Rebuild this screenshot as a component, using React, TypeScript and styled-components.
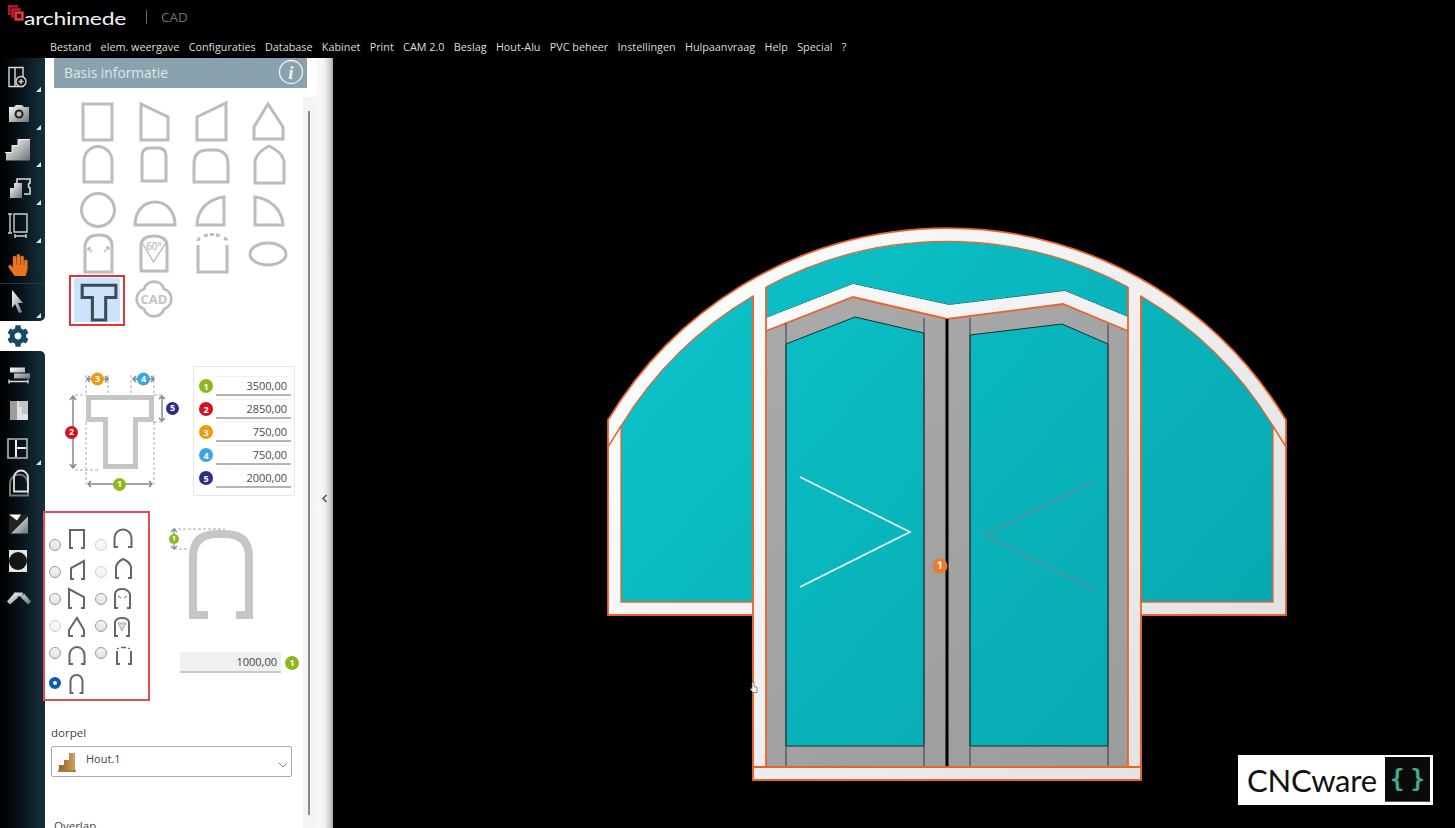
import React from "react";
import styled, { createGlobalStyle } from "styled-components";
import { FaCog, FaHandPaper } from "react-icons/fa";

const Global = createGlobalStyle`
  html, body { margin: 0; padding: 0; background: #000; height: 100%; overflow: hidden; }
  body { font-family: "Open Sans", "Noto Sans", sans-serif; }
  #root { height: 100%; }
`;

const Page = styled.div`
  width: 1455px; height: 828px; display: flex; flex-direction: column; background: #000; overflow: hidden;
`;
const TopBar = styled.header`
  height: 58px; flex: none; display: flex; flex-direction: column; background: #000;
`;
const BrandRow = styled.div`
  height: 34px; display: flex; align-items: center; padding-left: 8px;
`;
const LogoMark = styled.svg`
  width: 17px; height: 17px; margin-top: -8px; flex: none;
`;
const LogoText = styled.span`
  font-family: "Lato", sans-serif; font-size: 17.5px; font-weight: 400; color: #f2f2f2; width: 100px; margin-left: -1px; margin-top: 3px;
  display: inline-block; transform: scaleX(1.31); transform-origin: left center; white-space: nowrap; letter-spacing: -0.2px;
`;
const BrandSep = styled.span`
  width: 1px; height: 14px; background: #666; margin-left: 22px;
`;
const BrandName = styled.span`
  font-size: 13.5px; color: #727272; margin-left: 14px;
`;
const Menu = styled.nav`
  display: flex; gap: 9.35px; padding: 5px 0 0 50px; font-size: 10.8px; line-height: 15px; color: #dedede; white-space: nowrap;
`;
const Main = styled.div`
  flex: 1; display: flex; min-height: 0;
`;
const ToolRail = styled.aside`
  width: 45px; flex: none; display: flex; flex-direction: column; background: #fff;
`;
const ToolGroup = styled.div<{ $pos: "top" | "bottom" }>`
  display: flex; flex-direction: column; align-items: stretch;
  background: linear-gradient(90deg, #000 0%, #08131a 45%, #16303d 100%);
  border-radius: ${(p) => (p.$pos === "top" ? "0 0 5px 0" : "0 5px 0 0")};
  ${(p) => (p.$pos === "bottom" ? "flex: 1; padding-top: 4px;" : "")}
`;
const ToolButton = styled.div<{ $h: number; $divider?: boolean; $corner?: boolean; $dim?: boolean }>`
  height: ${(p) => p.$h}px; box-sizing: border-box; position: relative; display: flex; align-items: center; justify-content: flex-start;
  ${(p) => (p.$divider ? "border-top: 1px solid #1e3c4a;" : "")}
  &::after {
    content: ""; display: ${(p) => (p.$corner ? "block" : "none")}; position: absolute; right: 4px; bottom: 3px; width: 0; height: 0;
    border-left: 5px solid transparent; border-bottom: 5px solid ${(p) => (p.$dim ? "#222" : "#dfe3e5")};
  }
`;
const ToolGlyph = styled.svg`
  width: 36px; height: 36px; flex: none; overflow: visible;
`;
const GearCell = styled.div`
  height: 30px; background: #fff; display: flex; align-items: center; padding-left: 7px; color: #174a60; font-size: 22px;
`;
const HandCell = styled.span`
  display: flex; padding-left: 7px; color: #e8741c; font-size: 22px;
`;
const Panel = styled.section`
  width: 258px; flex: none; background: #fff; padding-left: 9px; box-sizing: border-box; color: #444; position: relative; z-index: 1;
`;
const PanelHeader = styled.div`
  width: 253px; height: 30px; background: #8aa2ad; color: #dfe7ea; font-size: 13.8px; display: flex; align-items: center;
  justify-content: space-between; padding: 0 3px 2px 10px; box-sizing: border-box;
`;
const ShapeGrid = styled.div`
  display: grid; grid-template-columns: repeat(4, 57px); grid-template-rows: repeat(4, 44px) 50px; margin: 12px 0 0 15px;
`;
const ShapeCell = styled.div`
  width: 57px; height: 44px; display: flex;
`;
const SelectedCell = styled.div`
  width: 56px; height: 51px; margin-top: -1px; border: 2px solid #e0343a; box-sizing: border-box; padding: 1px 3px 2px;
`;
const SelectedFill = styled.div`
  width: 100%; height: 100%; background: #cbe4fb; border-radius: 2px; display: flex;
`;
const ShapeSvg = styled.svg`
  width: 100%; height: 100%; overflow: visible; fill: none; stroke: #bcbcbc; stroke-width: 3;
`;
const DimensionRow = styled.div`
  display: flex; margin: 40px 0 0 6px; height: 130px;
`;
const DimDiagram = styled.svg`
  width: 133px; height: 130px; flex: none; overflow: visible;
`;
const DimTable = styled.div`
  width: 102px; height: 130px; border: 1px solid #e6e6e6; box-sizing: border-box; padding-top: 9px; display: flex; flex-direction: column; gap: 3px;
`;
const DimRow = styled.div`
  display: flex; align-items: center; height: 20px; padding-left: 5px; gap: 3px;
`;
const Badge = styled.span<{ $c: string; $s?: number }>`
  width: ${(p) => p.$s ?? 14}px; height: ${(p) => p.$s ?? 14}px; border-radius: 50%; background: ${(p) => p.$c}; color: #fff; font-size: 9px;
  font-weight: 700; display: flex; align-items: center; justify-content: center; flex: none;
`;
const DimValue = styled.span`
  width: 75px; height: 20px; box-sizing: border-box; border-top: 1px solid #f0f0f0; border-bottom: 2px solid #b4b4b4; font-size: 11px; line-height: 17px; text-align: right; padding-right: 4px;
  color: #4a4a4a;
`;
const ProfileRow = styled.div`
  display: flex; margin: 15px 0 0 -11px; height: 190px;
`;
const RadioBox = styled.div`
  width: 107px; height: 190px; flex: none; border: 2px solid #df4f4f; box-sizing: border-box; padding: 18px 0 0 4px; background: #fff;
  display: grid; grid-template-columns: 46px 46px; grid-template-rows: repeat(5, 27px) 30px;
`;
const RadioOption = styled.div`
  display: flex; align-items: center; gap: 5px; height: 27px; align-self: end;
`;
const Radio = styled.span<{ $on?: boolean; $off?: boolean }>`
  width: 12px; height: 12px; box-sizing: border-box; border-radius: 50%; flex: none; opacity: ${(p) => (p.$off ? 0.45 : 1)};
  border: ${(p) => (p.$on ? "4px solid #0a5cae" : "1px solid #999")};
  background: ${(p) => (p.$on ? "#fff" : "linear-gradient(#f4f4f4,#e2e2e2)")};
`;
const MiniIcon = styled.svg`
  width: 22px; height: 26px; overflow: visible; fill: none; stroke: #666; stroke-width: 2; flex: none;
`;
const ProfileSide = styled.div`
  display: flex; flex-direction: column; padding-left: 15px;
`;
const ProfileSvg = styled.svg`
  width: 100px; height: 120px; margin-top: 14px; flex: none; overflow: visible;
`;
const AmountRow = styled.div`
  display: flex; align-items: center; gap: 4px; margin: 7px 0 0 15px;
`;
const AmountValue = styled.span`
  width: 101px; height: 21px; box-sizing: border-box; background: #f0f0f0; border-bottom: 2px solid #c9c9c9; text-align: right; font-size: 11px; line-height: 20px;
  padding-right: 4px; color: #444;
`;
const FieldLabel = styled.div`
  font-size: 11.5px; color: #444; line-height: 16px;
`;
const FieldBlock = styled.div`
  margin: 24px 0 0 -3px;
`;
const SelectBox = styled.div`
  width: 241px; height: 31px; margin-top: 5px; box-sizing: border-box; border: 1px solid #aaa; border-radius: 2px; display: flex; align-items: center; padding-left: 6px;
  font-size: 11px; color: #444; position: relative;
`;
const SelectLabel = styled.span`
  margin: -6px 0 0 10px; flex: 1;
`;
const OverlapLabel = styled(FieldLabel)`
  margin: 41px 0 0 3px;
`;
const ScrollTrack = styled.div`
  width: 13px; flex: none; background: linear-gradient(#fff 39px, #f4f4f4 39px); display: flex; justify-content: center; padding: 53px 1px 13px 0; box-sizing: border-box;
`;
const ScrollThumb = styled.div`
  width: 2px; background: #8a8a8a; margin-right: 1px;
`;
const CollapseStrip = styled.div`
  width: 17px; flex: none; background: linear-gradient(90deg, #f9f9f9 0%, #f2f2f2 50%, #c9c9c9 85%, #a8a8a8 100%); display: flex; align-items: center; justify-content: center;
  padding-top: 110px; box-sizing: border-box;
`;
const Canvas = styled.main`
  flex: 1; position: relative; background: #000; min-width: 0;
`;
const CanvasSvg = styled.svg`
  display: block; width: 1122px; height: 770px;
`;
const Watermark = styled.div`
  position: absolute; left: 905px; top: 697px; width: 195px; height: 50px; background: #fff; display: flex; align-items: center; justify-content: space-between;
  box-sizing: border-box; padding: 2px 3px 3px 9px; color: #111; font-family: "Lato", sans-serif; font-size: 31px; letter-spacing: -0.2px;
`;
const BraceTile = styled.span`
  width: 45px; height: 45px; background: #0a0a0a; color: #3fae8a; font-family: "DejaVu Sans Mono", monospace; font-size: 24px; display: flex; align-items: center; justify-content: center; gap: 6px; font-weight: 700; letter-spacing: 0; border-bottom: 1px solid #555; box-sizing: border-box;
`;

const menu = ["Bestand", "elem. weergave", "Configuraties", "Database", "Kabinet", "Print", "CAM 2.0", "Beslag", "Hout-Alu", "PVC beheer", "Instellingen", "Hulpaanvraag", "Help", "Special", "?"];

const Defs = () => (
  <svg width="0" height="0" style={{ position: "absolute" }}>
    <defs>
      <linearGradient id="ti" x1="0" y1="0" x2="1" y2="1">
        <stop offset="0" stopColor="#fff" />
        <stop offset="1" stopColor="#6e7376" />
      </linearGradient>
      <linearGradient id="wood" x1="0" y1="0" x2="1" y2="0">
        <stop offset="0" stopColor="#8f6325" />
        <stop offset="1" stopColor="#cf9f5c" />
      </linearGradient>
    </defs>
  </svg>
);

type G = { h: number; corner?: boolean; divider?: boolean; dim?: boolean; draw: React.ReactNode };
const W = "url(#ti)";
const topTools: G[] = [
  { h: 37, corner: true, draw: <g fill="none" stroke="#d8d8d8" strokeWidth="1.4"><path d="M9 67h14v19H9zM15 67v19" /><circle cx="21" cy="81" r="5" fill="#111" /><path d="M18.5 81h5M21 78.500v5" /></g> },
  { h: 38, corner: true, draw: <g><path d="M9 107h5l2-2h6l2 2h5v15H9z" fill={W} /><circle cx="19" cy="114" r="4.500" fill="#222" /><circle cx="19" cy="114" r="2.500" fill="#bbb" /></g> },
  { h: 37, corner: true, draw: <g><path d="M6 160v-8h6v-7h6v-6h12v21z" fill={W} /><path d="M5 152h7v-7h6v-6h12" fill="none" stroke="#eee" strokeWidth="1" /></g> },
  { h: 38, corner: true, draw: <g><path d="M10 198v-10h4v-5h8v15z" fill={W} /><path d="M17 183v-4h13v4c-2 0-2 5 0 5v6h-6" fill="none" stroke="#ddd" strokeWidth="1.600" /></g> },
  { h: 38, corner: true, draw: <g fill="none" stroke="#cfcfcf" strokeWidth="1.400"><path d="M14 214h13v18H14z" /><path d="M10 214v19M8 214h4M8 233h4M15 236h11M15 234v4M26 234v4" /></g> },
  { h: 37, corner: true, dim: true, draw: null },
  { h: 38, corner: true, divider: true, draw: <path d="M12 289l11 13h-5l4 9-3 1-4-9-3 4z" fill={W} /> },
];
const botTools: G[] = [
  { h: 37, draw: <g><path d="M10 367h15v5h-15zM14 373h16v5h-16z" fill={W} /><path d="M9 381h19M9 379v4M28 379v4" stroke="#ddd" strokeWidth="1.300" fill="none" /></g> },
  { h: 38, draw: <g><rect x="10" y="401" width="18" height="19" fill="#c4c4c4" /><path d="M10 401h9v6h3v7h6v6H10z" fill="#fff" opacity=".5" /><path d="M10 401h7v19h-7z" fill="#555" opacity=".5" /></g> },
  { h: 38, corner: true, draw: <g fill="none" stroke="#b8b8b8" strokeWidth="1.600"><path d="M8 439h19v19H8z" /><path d="M16 440v17M16 448h10" stroke="#eee" strokeWidth="2" /></g> },
  { h: 37, draw: <g fill="none"><path d="M10 495v-12a9 9 0 0 1 18 0v12z" stroke="#777" strokeWidth="2" /><path d="M14 491v-14a7 7 0 0 1 14 0v14z" stroke="#e2e2e2" strokeWidth="1.800" /></g> },
  { h: 37, draw: <g><path d="M9 514h19v19H9z" fill="#222" /><path d="M9 514h12l-4 6z" fill="#fff" /><path d="M28 516v17H11z" fill={W} /></g> },
  { h: 38, draw: <g><rect x="9" y="550" width="18" height="22" fill="#e4e4e4" /><ellipse cx="18" cy="561" rx="9" ry="9" fill="#151515" /></g> },
  { h: 37, draw: <g fill={W}><path d="M7 601l7-8 4 4-8 7zM14 592h9l-1 4h-7zM24 593l7 8-3 3-7-7z" /></g> },
];
const Tool = ({ t, center }: { t: G; center: number }) => (
  <ToolButton $h={t.h} $corner={t.corner} $divider={t.divider} $dim={t.dim}>
    {t.draw ? (
      <ToolGlyph viewBox={`0 ${center - 18} 36 36`}>{t.draw}</ToolGlyph>
    ) : (
      <HandCell><FaHandPaper /></HandCell>
    )}
  </ToolButton>
);
const toolList = (list: G[], start: number) => {
  let y = start;
  return list.map((t, i) => {
    const center = y + t.h / 2;
    y += t.h;
    return <Tool key={i} t={t} center={center} />;
  });
};

const shapes: React.ReactNode[] = [
  <rect x="83" y="104" width="29" height="36" />,
  <path d="M141 104l27 13v23h-27z" />,
  <path d="M197 117l29-14v37h-29z" />,
  <path d="M268 104l15 23v12h-29v-12z" />,
  <path d="M84 182v-21a13.500 14 0 0 1 28 0v21z" />,
  <path d="M142 181v-25q0-8 8-8h8q8 0 8 8v25z" />,
  <path d="M194 182v-18q0-14 14-14h6q14 0 14 14v18z" />,
  <path d="M255 183v-22q2-9 14-15 13 6 15 15v22z" />,
  <circle cx="98" cy="210" r="16.500" />,
  <path d="M135 225c0-15 10-23 20-23s20 8 20 23z" />,
  <path d="M197 225c0-15 11-26 27-28v28z" />,
  <path d="M255 197c16 2 27 13 28 28h-28z" />,
  <g><path d="M85 272v-26q1-11 14-11t13 11v26z" /><path d="M92 252l-4-4m0 0h3m-3 0v3M104 252l5-5m0 0h-3m3 0v3" strokeWidth="1.300" /></g>,
  <g><path d="M141 271v-26q1-9 13-9t13 9v26z" /><path d="M143 244l10.500 18 11.500-18" strokeWidth="1.400" /><text x="154" y="250" fontSize="10" textAnchor="middle" fill="#aaa" stroke="none" fontFamily="Open Sans">60°</text></g>,
  <g><path d="M198 245v27h29v-27" /><path d="M198 241q0-2 2-3M204 236q8-3 16 0M224 238q3 1 3 3" strokeDasharray="4 2" /></g>,
  <ellipse cx="268" cy="254" rx="18" ry="11" />,
];

const rows = [100, 144, 188, 232];

type R = { y: number; cx: number; on?: boolean; off?: boolean; d: React.ReactNode };
const radioOptions: R[] = [
  { y: 544, cx: 76, d: <path d="M72 547h-3v-18h14v18h-3" /> },
  { y: 544, cx: 123, off: true, d: <path d="M118 546h-3.500v-9a8.500 8.500 0 0 1 17 0v9H128" /> },
  { y: 571, cx: 76, d: <path d="M73 578h-3v-11l13-7v18h-3" /> },
  { y: 571, cx: 123, off: true, d: <path d="M119 577h-3v-11q1-5 7-8 7 3 8 8v11h-3" /> },
  { y: 598, cx: 76, d: <path d="M71 607h-3v-19l15 8v11h-3" /> },
  { y: 598, cx: 123, d: <g><path d="M118 607h-3v-14q1-5 7-5t8 5v14h-3" /><path d="M118 595l3 2M127 595l-3 2" strokeWidth="1" /></g> },
  { y: 625, cx: 76, off: true, d: <path d="M72 635h-4v-6l8-12 7 12v6h-3" /> },
  { y: 625, cx: 123, d: <g><path d="M118 635h-3v-14q1-4 7-4t7 4v14h-3" /><path d="M118 622l4 8 4-8z" strokeWidth="1" stroke="#aaa" fill="#ddd" /></g> },
  { y: 652, cx: 76, d: <path d="M72 663h-3.500v-9a7.500 8 0 0 1 15 0v9H80" /> },
  { y: 652, cx: 123, d: <g><path d="M117 650v13h3M131 650v13h-3" /><path d="M117 648l2-1M121 646.500h5M128 647l2 1" strokeWidth="1.300" /></g> },
  { y: 682, cx: 76, on: true, d: <path d="M72.500 692h-3v-12a6 6 0 0 1 12 0v12h-3" /> },
];

const dims = [
  { c: "#8cb81e", n: 1, v: "3500,00" },
  { c: "#d4111f", n: 2, v: "2850,00" },
  { c: "#ef9a0e", n: 3, v: "750,00" },
  { c: "#3ba7e0", n: 4, v: "750,00" },
  { c: "#2e2d86", n: 5, v: "2000,00" },
];

const SvgBadge = ({ x, y, c, n, r = 6.500 }: { x: number; y: number; c: string; n: number; r?: number }) => (
  <g>
    <circle cx={x} cy={y} r={r} fill={c} />
    <text x={x} y={y + r * 0.46} fontSize={r * 1.35} fontWeight="700" textAnchor="middle" fill="#fff" fontFamily="Open Sans">{n}</text>
  </g>
);

const OR = "#e8642a";
const ARC_OUT = 395.3;
const ARC_IN = 382;

export default function App() {
  return (
    <Page>
      <Global />
      <Defs />
      <TopBar>
        <BrandRow>
          <LogoMark viewBox="0 0 17 17">
            <rect x="0" y="0" width="10" height="10" fill="#a51c22" />
            <rect x="3" y="3" width="10" height="10" fill="#c8242b" stroke="#000" strokeWidth=".6" />
            <rect x="6" y="6" width="10" height="10" fill="#ed2f33" stroke="#000" strokeWidth=".6" />
            <rect x="9" y="9" width="4" height="4" fill="#111" />
          </LogoMark>
          <LogoText>archimede</LogoText>
          <BrandSep />
          <BrandName>CAD</BrandName>
        </BrandRow>
        <Menu>{menu.map((m) => <span key={m}>{m}</span>)}</Menu>
      </TopBar>
      <Main>
        <ToolRail>
          <ToolGroup $pos="top">{toolList(topTools, 58)}</ToolGroup>
          <GearCell><FaCog /></GearCell>
          <ToolGroup $pos="bottom">{toolList(botTools, 355)}</ToolGroup>
        </ToolRail>
        <Panel>
          <PanelHeader>
            Basis informatie
            <svg width="26" height="26" viewBox="0 0 26 26">
              <circle cx="13" cy="13" r="11.500" fill="none" stroke="#eef2f4" strokeWidth="1.300" />
              <text x="13" y="20" fontSize="19" fontStyle="italic" fontWeight="700" textAnchor="middle" fill="#eef2f4" fontFamily="Liberation Serif">i</text>
            </svg>
          </PanelHeader>
          <ShapeGrid>
            {shapes.map((s, i) => (
              <ShapeCell key={i}>
                <ShapeSvg viewBox={`${69 + (i % 4) * 57} ${rows[Math.floor(i / 4)]} 57 44`}>{s}</ShapeSvg>
              </ShapeCell>
            ))}
            <SelectedCell>
              <SelectedFill>
                <ShapeSvg viewBox="75 278 45 43" style={{ stroke: "#3d4a58" }}>
                  <path d="M83 285h33v12h-10v22H93v-22H83z" />
                </ShapeSvg>
              </SelectedFill>
            </SelectedCell>
            <ShapeCell>
              <ShapeSvg viewBox="126 278 57 44">
                <path d="M144 291a10.500 10.500 0 0 1 20 0a10.500 10.500 0 0 1 0 20a10.500 10.500 0 0 1-20 0a10.500 10.500 0 0 1 0-20z" strokeWidth="2.800" />
                <text x="154" y="306" fontSize="13" fontWeight="700" textAnchor="middle" fill="#c4c4c4" stroke="none" fontFamily="Open Sans">CAD</text>
              </ShapeSvg>
            </ShapeCell>
          </ShapeGrid>
          <DimensionRow>
            <DimDiagram viewBox="60 366 133 130">
              <path d="M88.500 397.500h63v22h-16v47h-30v-47h-17z" fill="none" stroke="#c6c6c6" strokeWidth="5" />
              <g stroke="#aaa" strokeWidth="1" strokeDasharray="3 2" fill="none">
                <path d="M86 375v20M108 375v20M131 375v20M154 375v20M86 422v62M154 422v62M75 395h11M75 470h25M154 395h8M154 422h8" />
              </g>
              <g stroke="#888" strokeWidth="1.500" fill="none">
                <path d="M73 396v72M70 400l3-4 3 4M70 464l3 4 3-4" />
                <path d="M162 396v25M159 399l3-3 3 3M159 418l3 3 3-3" />
                <path d="M88 484h64M91 481l-3 3 3 3M149 481l3 3-3 3" />
                <path d="M87 379h21M90 376l-3 3 3 3M105 376l3 3-3 3" />
                <path d="M133 379h21M136 376l-3 3 3 3M151 376l3 3-3 3" />
              </g>
              <SvgBadge x={97.500} y={379} c="#ef9a0e" n={3} />
              <SvgBadge x={143.500} y={379} c="#3ba7e0" n={4} />
              <SvgBadge x={172.500} y={408.500} c="#2e2d86" n={5} />
              <SvgBadge x={71.500} y={432.500} c="#d4111f" n={2} />
              <SvgBadge x={119.500} y={484.500} c="#8cb81e" n={1} />
            </DimDiagram>
            <DimTable>
              {dims.map((d) => (
                <DimRow key={d.n}>
                  <Badge $c={d.c}>{d.n}</Badge>
                  <DimValue>{d.v}</DimValue>
                </DimRow>
              ))}
            </DimTable>
          </DimensionRow>
          <ProfileRow>
            <RadioBox>
              {radioOptions.map((r, i) => (
                <RadioOption key={i}>
                  <Radio $on={r.on} $off={r.off} />
                  <MiniIcon viewBox={`${r.cx - 11} ${r.y - 13} 22 26`}>{r.d}</MiniIcon>
                </RadioOption>
              ))}
            </RadioBox>
            <ProfileSide>
              <ProfileSvg viewBox="165 527 100 120">
                <path d="M189 621v-62q0-27 28-27h8q28 0 28 27v62h-17v-8h9v-54q0-19-20-19h-8q-20 0-20 19v54h11v8z" fill="#c6c6c6" />
                <path d="M173 531h52M174 551h14" stroke="#aaa" strokeDasharray="3 2" fill="none" />
                <path d="M174 531v20M171 534l3-3 3 3M171 548l3 3 3-3" stroke="#888" strokeWidth="1.200" fill="none" />
                <SvgBadge x={174} y={541} c="#8cb81e" n={1} r={5} />
              </ProfileSvg>
              <AmountRow>
                <AmountValue>1000,00</AmountValue>
                <Badge $c="#8cb81e">1</Badge>
              </AmountRow>
            </ProfileSide>
          </ProfileRow>
          <FieldBlock>
            <FieldLabel>dorpel</FieldLabel>
            <SelectBox>
              <svg width="18" height="20" viewBox="0 0 18 20">
                <path d="M1 20v-7h5v-5h5V1h6v19z" fill="url(#wood)" />
                <path d="M0 18h18v2H0z" fill="#a5803f" />
              </svg>
              <SelectLabel>Hout.1</SelectLabel>
              <svg width="10" height="6" viewBox="0 0 10 6" style={{ position: "absolute", right: 3, top: 15 }}>
                <path d="M1 1l4 4 4-4" fill="none" stroke="#888" strokeWidth="1" />
              </svg>
            </SelectBox>
            <OverlapLabel>Overlap</OverlapLabel>
          </FieldBlock>
        </Panel>
        <ScrollTrack><ScrollThumb /></ScrollTrack>
        <CollapseStrip>
          <svg width="7" height="9" viewBox="0 0 7 9"><path d="M5.500 1L2 4.500 5.500 8" fill="none" stroke="#555" strokeWidth="1.600" /></svg>
        </CollapseStrip>
        <Canvas>
          <CanvasSvg viewBox="333 58 1122 770">
            <defs>
              <linearGradient id="teal" gradientUnits="userSpaceOnUse" x1="640" y1="240" x2="1260" y2="790">
                <stop offset="0" stopColor="#0cc4ca" />
                <stop offset="1" stopColor="#07a4ad" />
              </linearGradient>
              <linearGradient id="frame" gradientUnits="userSpaceOnUse" x1="640" y1="240" x2="1260" y2="790">
                <stop offset="0" stopColor="#ffffff" />
                <stop offset="1" stopColor="#dfdfdf" />
              </linearGradient>
              <linearGradient id="grey" gradientUnits="userSpaceOnUse" x1="760" y1="300" x2="1130" y2="770">
                <stop offset="0" stopColor="#aaaaaa" />
                <stop offset="1" stopColor="#9c9c9c" />
              </linearGradient>
            </defs>
            <path d={`M608 420A${ARC_OUT} ${ARC_OUT} 0 0 1 1286 420V615H1141V780H753V615H608Z`} fill="url(#frame)" stroke={OR} strokeWidth="1.800" />
            <path d={`M621 426A${ARC_IN} ${ARC_IN} 0 0 1 753 296V602H621Z`} fill="url(#teal)" stroke={OR} strokeWidth="1.300" />
            <path d={`M1273 426A${ARC_IN} ${ARC_IN} 0 0 0 1141 296V602H1273Z`} fill="url(#teal)" stroke={OR} strokeWidth="1.300" />
            <path d={`M766 287A${ARC_IN} ${ARC_IN} 0 0 1 1128 287V317L1065 291L949 305L853 284L766 318Z`} fill="url(#teal)" />
            <path d={`M766 287A${ARC_IN} ${ARC_IN} 0 0 1 1128 287`} fill="none" stroke={OR} strokeWidth="1.200" />
            <path d="M766 318L853 284L949 305L1065 291L1128 317" fill="none" stroke="#223" strokeWidth="1" strokeDasharray="2 1" />
            <path d="M766 318L853 284L949 305L1065 291L1128 317V331L1063 304L947 319L853 297L766 331Z" fill="url(#frame)" />
            <path d="M766 331L853 297L947 319L1063 304L1128 331V767H766Z" fill="url(#grey)" />
            <path d="M766 331L853 297L947 319L1063 304L1128 331" fill="none" stroke={OR} strokeWidth="1.800" />
            <path d="M786 344L855 317L924 333V746H786Z" fill="url(#teal)" stroke="#11303a" strokeWidth="1" />
            <path d="M970 335L1062 324L1108 344V746H970Z" fill="url(#teal)" stroke="#11303a" strokeWidth="1" />
            <path d="M786 323V767M924 318V767M970 318V767M1108 324V767" stroke="#2b3f47" strokeWidth="1" fill="none" />
            <rect x="945.500" y="319" width="3" height="448" fill="#000" />
            <path d="M753 296V780M766 287V767M1128 287V767M1141 296V780" fill="none" stroke={OR} strokeWidth="1.800" />
            <path d="M753 767H1141" stroke={OR} strokeWidth="1.800" />
            <path d="M608 447L621 426M1286 447L1273 426" stroke={OR} strokeWidth="1.500" fill="none" />
            <path d="M800 477L910 532L800 587" fill="none" stroke="#f4ffff" strokeWidth="1.600" />
            <path d="M1095 481L984 535L1097 591" fill="none" stroke="#5d8f95" strokeWidth="1.600" />
            <SvgBadge x={940} y={566} c="#ee7a2c" n={1} r={7.500} />
            <path d="M752 682v7l-1.500-1.500v2l2.500 3h4v-5l-3-1v-4.500z" fill="#f4f4f4" stroke="#444" strokeWidth=".6" />
          </CanvasSvg>
          <Watermark>
            CNCware
            <BraceTile><span>{"{"}</span><span>{"}"}</span></BraceTile>
          </Watermark>
        </Canvas>
      </Main>
    </Page>
  );
}
